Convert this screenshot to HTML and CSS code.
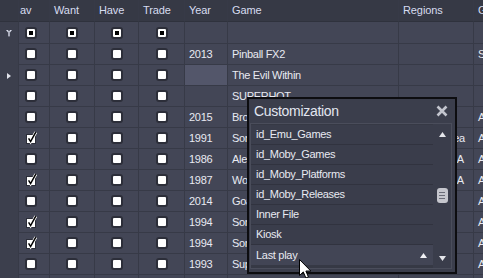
FILE: index.html
```html
<!DOCTYPE html>
<html lang="en">
<head>
    <meta charset="UTF-8">
    <meta name="viewport" content="width=device-width, initial-scale=1.0">
    <title>Games - Customization</title>
    <link rel="stylesheet" href="styles.css">
</head>
<body>
    <div class="grid">
        <div class="row head">
            <div class="cell ind"></div>
            <div class="cell c-fav">av</div>
            <div class="cell c-want">Want</div>
            <div class="cell c-have">Have</div>
            <div class="cell c-trade">Trade</div>
            <div class="cell c-year">Year</div>
            <div class="cell c-game">Game</div>
            <div class="cell c-reg">Regions</div>
            <div class="cell c-genre">Genre</div>
        </div>
        <div class="row filter">
            <div class="cell ind">
                <svg width="6" height="8" viewBox="0 0 6 8">
                    <path d="M0 1 H6 L4 3.6 H2 Z" fill="#d8dcea"/>
                    <rect x="2.3" y="3.4" width="1.4" height="4" fill="#d8dcea"/>
                    <circle cx="3" cy="1.6" r="0.8" fill="#3c3f4d"/>
                </svg>
            </div>
            <div class="cell c-fav chk"><span class="box dot"></span></div>
            <div class="cell c-want chk"><span class="box dot"></span></div>
            <div class="cell c-have chk"><span class="box dot"></span></div>
            <div class="cell c-trade chk"><span class="box dot"></span></div>
            <div class="cell c-year"></div>
            <div class="cell c-game"></div>
            <div class="cell c-reg"></div>
            <div class="cell c-genre"></div>
        </div>
    </div>

    <div class="popup">
        <div class="pop-title">
            <span>Customization</span>
            <svg class="close" width="12" height="12" viewBox="0 0 12 12"><path d="M1.5 1.5 L10.5 10.5 M10.5 1.5 L1.5 10.5" stroke="#c3c5ce" stroke-width="2.6"/></svg>
        </div>
        <div class="list">
            <div class="items">
                <div class="item">id_Emu_Games</div>
                <div class="item">id_Moby_Games</div>
                <div class="item">id_Moby_Platforms</div>
                <div class="item">id_Moby_Releases</div>
                <div class="item">Inner File</div>
                <div class="item">Kiosk</div>
                <div class="item hover">
                    <span>Last play</span>
                    <svg width="7" height="5" viewBox="0 0 7 5"><path d="M3.5 0 L7 5 H0 Z" fill="#f0f0f4"/></svg>
                </div>
            </div>
            <div class="scroll">
                <svg class="arrow-up" width="7" height="5" viewBox="0 0 7 5"><path d="M3.5 0 L7 5 H0 Z" fill="#e4e5ea"/></svg>
                <div class="thumb"><i></i><i></i><i></i></div>
                <svg class="arrow-down" width="7" height="5" viewBox="0 0 7 5"><path d="M0 0 H7 L3.5 5 Z" fill="#e4e5ea"/></svg>
            </div>
        </div>
    </div>

    <svg class="cursor" width="13" height="20" viewBox="0 0 13 20">
        <path d="M0.5 0.5 V16.5 L4.3 12.9 L6.9 19 L9.4 17.9 L6.9 12 H11.8 Z" fill="#fff" stroke="#000" stroke-width="1"/>
    </svg>

    <script>
        const games = [
            { year: '2013', name: 'Pinball FX2', fav: false, region: '', genre: 'Sports' },
            { year: '', name: 'The Evil Within', fav: false, region: '', genre: '', current: true },
            { year: '', name: 'SUPERHOT', fav: false, region: '', genre: '' },
            { year: '2015', name: 'Broforce', fav: false, region: '', genre: 'Action' },
            { year: '1991', name: 'Sonic the Hedgehog', fav: true, region: 'Japan, Korea', genre: 'Action' },
            { year: '1986', name: 'Alex Kidd in Miracle World', fav: false, region: 'Europe, USA', genre: 'Action' },
            { year: '1987', name: 'Wonder Boy in Monster Land', fav: true, region: 'Europe, USA', genre: 'Action' },
            { year: '2014', name: 'Goat Simulator', fav: false, region: '', genre: 'Action' },
            { year: '1994', name: 'Sonic the Hedgehog 3', fav: true, region: '', genre: 'Action' },
            { year: '1994', name: 'Sonic & Knuckles', fav: true, region: '', genre: 'Action' },
            { year: '1993', name: 'Super Mario All-Stars', fav: false, region: '', genre: 'Action' },
            { year: '1992', name: 'Streets of Rage 2', fav: false, region: '', genre: 'Action' }
        ];

        const tick = '<svg class="tick" width="14" height="14" viewBox="0 0 14 14">' +
            '<rect x="1.5" y="3.5" width="9" height="9" fill="#fff" stroke="#2c2e39"/>' +
            '<path d="M3.6 7.4 L5.6 10.6 L10.8 1.2" stroke="#fff" stroke-width="3" fill="none"/>' +
            '<path d="M3.6 7.4 L5.6 10.6 L10.8 1.2" stroke="#000" stroke-width="1.5" fill="none"/></svg>';
        const box = '<span class="box"></span>';

        let html = '';
        games.forEach(game => {
            html += `<div class="row">
                <div class="cell ind">${game.current ? '<span class="current"></span>' : ''}</div>
                <div class="cell c-fav chk">${game.fav ? tick : box}</div>
                <div class="cell c-want chk">${box}</div>
                <div class="cell c-have chk">${box}</div>
                <div class="cell c-trade chk">${box}</div>
                <div class="cell c-year${game.current ? ' selected' : ''}">${game.year}</div>
                <div class="cell c-game">${game.name}</div>
                <div class="cell c-reg">${game.region}</div>
                <div class="cell c-genre">${game.genre}</div>
            </div>`;
        });
        document.querySelector('.grid').insertAdjacentHTML('beforeend', html);
    </script>
</body>
</html>
```

FILE: styles.css
```css
body {
    margin: 0;
    width: 483px;
    height: 278px;
    overflow: hidden;
    position: relative;
    background-color: #434656;
    font-family: "Liberation Sans", Arial, sans-serif;
    font-size: 11px;
    color: #e8eaf2;
}
.grid {
    width: 560px;
}
.row {
    display: flex;
    height: 21px;
}
.cell {
    flex: none;
    box-sizing: border-box;
    height: 100%;
    padding-left: 4px;
    border-right: 1px solid #373a47;
    border-bottom: 1px solid #373a47;
    line-height: 20px;
    white-space: nowrap;
    overflow: hidden;
    letter-spacing: -0.3px;
}
.head {
    height: 22px;
    background-color: #363945;
    color: #d6dcf0;
}
.head .cell {
    line-height: 21px;
    letter-spacing: -0.1px;
    border-bottom-color: #2f323d;
}
.filter {
    height: 22px;
}
.filter .cell {
    line-height: 21px;
}
.ind {
    width: 19px;
    padding: 0;
    background-color: #3c3f4d;
    border-bottom: none;
    display: flex;
    align-items: center;
    justify-content: center;
}
.head .ind {
    background-color: #363945;
    border-bottom: 1px solid #2f323d;
}
.c-fav { width: 31px; padding-left: 1px; }
.c-want { width: 45px; }
.c-have { width: 44px; }
.c-trade { width: 46px; }
.c-year { width: 43px; }
.c-game { width: 171px; }
.c-reg { width: 75px; }
.c-genre { width: 80px; }
.selected {
    background-color: #53566a;
}
.chk {
    display: flex;
    align-items: center;
    justify-content: center;
    padding: 0;
}
.c-fav.chk {
    justify-content: flex-start;
    padding-left: 6px;
}
.box {
    width: 12px;
    height: 12px;
    box-sizing: border-box;
    padding: 2px;
    border-radius: 3px;
    background-color: #2c2e39;
}
.box::before {
    content: "";
    display: block;
    width: 8px;
    height: 8px;
    border-radius: 1px;
    background-color: #fff;
}
.box.dot::before {
    background-color: #000;
    box-shadow: inset 0 0 0 2px #fff;
}
.tick {
    display: block;
}
.current {
    width: 0;
    height: 0;
    margin-left: -1px;
    border-top: 3.5px solid transparent;
    border-bottom: 3.5px solid transparent;
    border-left: 4px solid #e2e4ec;
}

.popup {
    position: absolute;
    left: 247px;
    top: 97px;
    width: 210px;
    height: 177px;
    box-sizing: border-box;
    border: 2px solid #0d0d10;
    background-color: #3b3e4c;
}
.pop-title {
    height: 24px;
    display: flex;
    align-items: center;
    justify-content: space-between;
    padding: 0 7px 0 5px;
    font-size: 14px;
    letter-spacing: -0.3px;
    color: #e2e6f0;
}
.close {
    display: block;
}
.list {
    margin: 0 3px 0 1px;
    height: 146px;
    box-sizing: border-box;
    border: 1px solid #4a4d5b;
    background-color: #363945;
    display: flex;
}
.items {
    width: 182px;
    padding-top: 1px;
}
.item {
    height: 20px;
    box-sizing: border-box;
    padding-left: 5px;
    border-bottom: 1px solid #31333f;
    background-color: #3a3d4b;
    line-height: 19px;
    letter-spacing: -0.3px;
    color: #e8eaf2;
}
.item.hover {
    border-bottom: none;
    background-color: #424555;
    display: flex;
    align-items: center;
    justify-content: space-between;
    padding-right: 6px;
    line-height: 20px;
}
.scroll {
    width: 18px;
    background-color: #3a3d4b;
    display: flex;
    flex-direction: column;
    align-items: center;
}
.arrow-up {
    margin-top: 8px;
}
.thumb {
    width: 11px;
    height: 15px;
    margin-top: 51px;
    border-radius: 3px;
    background-color: #c5c6cd;
    display: flex;
    flex-direction: column;
    align-items: center;
    justify-content: center;
    gap: 2px;
}
.thumb i {
    display: block;
    width: 6px;
    height: 1px;
    background-color: #6a6c78;
}
.arrow-down {
    margin-top: auto;
    margin-bottom: 7px;
}
.cursor {
    position: absolute;
    left: 299px;
    top: 259px;
}
```
